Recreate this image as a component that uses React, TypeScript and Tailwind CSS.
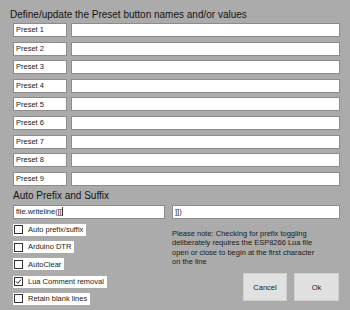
const presets = ["Preset 1", "Preset 2", "Preset 3", "Preset 4", "Preset 5", "Preset 6", "Preset 7", "Preset 8", "Preset 9"];

const options = [
  { label: "Auto prefix/suffix", checked: false },
  { label: "Arduino DTR", checked: false },
  { label: "AutoClear", checked: false },
  { label: "Lua Comment removal", checked: true },
  { label: "Retain blank lines", checked: false },
];

function Box({ children, className }: { children?: React.ReactNode; className?: string }) {
  return (
    <div
      className={
        "h-[14px] bg-white border border-[#8c8c8c] flex items-center px-[2px] text-[7.5px] leading-none text-[#1a1a1a] " +
        (className ?? "")
      }
    >
      {children}
    </div>
  );
}

function Option({ label, checked }: { label: string; checked: boolean }) {
  return (
    <div className="h-[12px] self-start bg-white flex items-center gap-[5px] pl-[1px] pr-[3px]">
      <div className="w-[9px] h-[9px] border border-[#333] bg-white flex items-center justify-center">
        {checked && (
          <svg width="7" height="7" viewBox="0 0 7 7">
            <path d="M1 3.5 L2.8 5.3 L6 1.5" fill="none" stroke="#222" strokeWidth="1" />
          </svg>
        )}
      </div>
      <span className="text-[7.5px] leading-none text-[#1a1a1a]">{label}</span>
    </div>
  );
}

export default function App() {
  return (
    <div
      className="w-[350px] h-[310px] bg-[#ababab] overflow-hidden pl-[13px] pr-[10px] pt-[9px]"
      style={{ fontFamily: '"Liberation Sans", Arial, sans-serif' }}
    >
      <h1 className="text-[10px] leading-[12px] text-[#141414] -ml-[3px]">
        Define/update the Preset button names and/or values
      </h1>
      <div className="mt-[2px] flex flex-col gap-[4.6px]">
        {presets.map((p) => (
          <div key={p} className="flex gap-[4px]">
            <Box className="w-[54px]">{p}</Box>
            <Box className="flex-1" />
          </div>
        ))}
      </div>
      <h2 className="mt-[4.7px] text-[10px] leading-[12px] text-[#141414]">Auto Prefix and Suffix</h2>
      <div className="mt-[2.5px] flex gap-[7px]">
        <Box className="w-[152px]">
          file.writeline([[<span className="inline-block w-[1px] h-[9px] bg-[#333]" />
        </Box>
        <Box className="flex-1">]])</Box>
      </div>
      <div className="flex mt-[5px]">
        <div className="w-[159px] flex flex-col gap-[5.2px]">
          {options.map((o) => (
            <Option key={o.label} label={o.label} checked={o.checked} />
          ))}
        </div>
        <div className="flex-1 flex flex-col">
          <p className="mt-[5px] text-[7.5px] leading-[9.3px] text-[#1a1a1a] pr-[18px]">
            Please note: Checking for prefix toggling deliberately requires the ESP8266 Lua file open or close to begin at
            the first character on the line
          </p>
          <div className="mt-[7px] flex justify-end gap-[7px] pr-[1px]">
            <button className="w-[44px] h-[28px] bg-[#e1e1e1] border border-[#d0d0d0] text-[7.5px] text-[#1a1a1a]">
              Cancel
            </button>
            <button className="w-[45px] h-[28px] bg-[#e1e1e1] border border-[#d0d0d0] text-[7.5px] text-[#1a1a1a]">
              Ok
            </button>
          </div>
        </div>
      </div>
    </div>
  );
}
